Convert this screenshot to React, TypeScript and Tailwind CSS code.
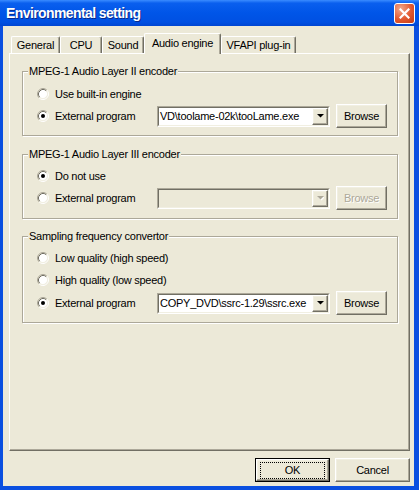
import type { ReactNode } from 'react';

const raised =
  'border border-t-white border-l-white border-r-[#716F64] border-b-[#716F64] shadow-[inset_-1px_-1px_#ACA899,inset_1px_1px_#F1EFE2]';

function Radio({ checked = false }: { checked?: boolean }) {
  return (
    <svg width="12" height="12" viewBox="0 0 12 12" className="shrink-0">
      <circle cx="6" cy="6" r="4.5" fill="#fff" />
      <path d="M2.11 9.89 A5.5 5.5 0 0 1 9.89 2.11" fill="none" stroke="#ACA899" />
      <path d="M9.89 2.11 A5.5 5.5 0 0 1 2.11 9.89" fill="none" stroke="#fff" />
      <path d="M2.82 9.18 A4.5 4.5 0 0 1 9.18 2.82" fill="none" stroke="#716F64" />
      <path d="M9.18 2.82 A4.5 4.5 0 0 1 2.82 9.18" fill="none" stroke="#F1EFE2" />
      {checked && <circle cx="6" cy="6" r="2" fill="#000" />}
    </svg>
  );
}

function RadioLabel({ checked, label }: { checked?: boolean; label: string }) {
  return (
    <div className="flex items-center">
      <Radio checked={checked} />
      <span className="ml-[6px] leading-[13px]">{label}</span>
    </div>
  );
}

function ComboBox({ value, disabled = false }: { value?: string; disabled?: boolean }) {
  return (
    <div className="flex h-[21px] w-[173px] border border-t-[#ACA899] border-l-[#ACA899] border-r-white border-b-white">
      <div
        className={`flex flex-1 border border-t-[#716F64] border-l-[#716F64] border-r-[#F1EFE2] border-b-[#F1EFE2] ${
          disabled ? 'bg-[#ECE9D8]' : 'bg-white'
        }`}
      >
        <span className="flex-1 overflow-hidden whitespace-nowrap pl-[1px] leading-[17px]">{value}</span>
        <div className={`flex w-[16px] items-center justify-center bg-[#ECE9D8] ${raised}`}>
          <svg width="7" height="5" viewBox="0 0 7 5">
            {disabled && <path d="M1 1h7L4.5 4.5z" fill="#fff" />}
            <path d="M0 0h7L3.5 3.5z" fill={disabled ? '#ACA899' : '#000'} />
          </svg>
        </div>
      </div>
    </div>
  );
}

function Button({
  children,
  disabled = false,
  className = '',
}: {
  children: ReactNode;
  disabled?: boolean;
  className?: string;
}) {
  return (
    <button
      type="button"
      className={`flex items-center justify-center bg-[#ECE9D8] leading-[13px] ${raised} ${
        disabled ? 'text-[#ACA899] [text-shadow:1px_1px_#fff]' : ''
      } ${className}`}
    >
      {children}
    </button>
  );
}

function GroupBox({
  title,
  className,
  children,
}: {
  title: string;
  className: string;
  children: ReactNode;
}) {
  return (
    <div
      className={`w-[376px] border border-[#ACA899] shadow-[1px_1px_0_#fff,inset_1px_1px_0_#fff] ${className}`}
    >
      <div className="-mt-[7px] ml-[5px] w-fit bg-[#ECE9D8] px-px leading-[13px]">{title}</div>
      {children}
    </div>
  );
}

const tabs = [
  { label: 'General', width: 'w-[49px]' },
  { label: 'CPU', width: 'w-[42px]' },
  { label: 'Sound', width: 'w-[42px]' },
  { label: 'Audio engine', width: 'w-[77px]', active: true },
  { label: 'VFAPI plug-in', width: 'w-[75px]' },
];

export default function App() {
  return (
    <div className="flex h-[490px] w-[419px] flex-col bg-[#0A4FE0] font-['Liberation_Sans',Arial,sans-serif] text-[11px] tracking-[-0.25px] text-black">
      {/* title bar */}
      <div className="flex h-[26px] items-center justify-between bg-[linear-gradient(to_bottom,#3A8CFF_0%,#0A5FEE_12%,#0055E8_50%,#0050E2_85%,#0046D2_100%)] pl-[6px] pr-[4px]">
        <span className="text-[14px] font-bold tracking-[-0.6px] text-white [text-shadow:1px_1px_#0A2A8A]">
          Environmental setting
        </span>
        <div className="flex size-[21px] items-center justify-center rounded-[3px] border border-white bg-[radial-gradient(circle_at_30%_25%,#F2A88C_0%,#E2582F_55%,#C23C15_100%)]">
          <svg width="11" height="11" viewBox="0 0 11 11">
            <path d="M1.5 1.5l8 8M9.5 1.5l-8 8" stroke="#fff" strokeWidth="2.2" strokeLinecap="square" />
          </svg>
        </div>
      </div>

      <div className="flex flex-1 flex-col pb-[4px] pl-[3px] pr-[5px]">
        <div className="flex flex-1 flex-col bg-[#ECE9D8] pt-[7px]">
          {/* tabs */}
          <div className="relative z-10 ml-[8px] flex h-[20px] items-end">
            {tabs.map((tab) =>
              tab.active ? (
                <div
                  key={tab.label}
                  className={`-mb-px flex h-[21px] justify-center rounded-t-[2px] border-l border-t border-r border-l-white border-t-white border-r-[#716F64] bg-[#ECE9D8] pt-[3px] leading-[13px] shadow-[inset_-1px_0_#ACA899] ${tab.width}`}
                >
                  {tab.label}
                </div>
              ) : (
                <div
                  key={tab.label}
                  className={`flex h-[17px] justify-center rounded-t-[2px] border-l border-t border-r border-l-white border-t-white border-r-[#716F64] bg-[#ECE9D8] pt-[2px] leading-[13px] shadow-[inset_-1px_0_#ACA899] ${tab.width}`}
                >
                  {tab.label}
                </div>
              ),
            )}
          </div>

          {/* tab panel */}
          <div className="ml-[6px] h-[398px] w-[401px] border border-t-white border-l-white border-r-[#716F64] border-b-[#716F64] pl-[12px] shadow-[inset_-1px_-1px_#ACA899]">
            <GroupBox title="MPEG-1 Audio Layer II encoder" className="mt-[17px] pb-[7px]">
              <div className="mt-[6px] flex h-[20px] items-center pl-[14px]">
                <RadioLabel label="Use built-in engine" />
              </div>
              <div className="flex h-[24px] items-center pl-[14px]">
                <div className="w-[120px]">
                  <RadioLabel checked label="External program" />
                </div>
                <ComboBox value="VD\toolame-02k\tooLame.exe" />
                <Button className="ml-[6px] h-[24px] w-[51px]">Browse</Button>
              </div>
            </GroupBox>

            <GroupBox title="MPEG-1 Audio Layer III encoder" className="mt-[18px] pb-[8px]">
              <div className="mt-[5px] flex h-[20px] items-center pl-[14px]">
                <RadioLabel checked label="Do not use" />
              </div>
              <div className="flex h-[24px] items-center pl-[14px]">
                <div className="w-[120px]">
                  <RadioLabel label="External program" />
                </div>
                <ComboBox disabled />
                <Button disabled className="ml-[6px] h-[24px] w-[51px]">
                  Browse
                </Button>
              </div>
            </GroupBox>

            <GroupBox title="Sampling frequency convertor" className="mt-[17px] pb-[7px]">
              <div className="mt-[4px] flex h-[22px] items-center pl-[14px]">
                <RadioLabel label="Low quality (high speed)" />
              </div>
              <div className="flex h-[22px] items-center pl-[14px]">
                <RadioLabel label="High quality (low speed)" />
              </div>
              <div className="flex h-[24px] items-center pl-[14px]">
                <div className="w-[120px]">
                  <RadioLabel checked label="External program" />
                </div>
                <ComboBox value="COPY_DVD\ssrc-1.29\ssrc.exe" />
                <Button className="ml-[6px] h-[24px] w-[51px]">Browse</Button>
              </div>
            </GroupBox>
          </div>

          {/* dialog buttons */}
          <div className="mr-[4px] mt-[7px] flex justify-end gap-[5px]">
            <div className="h-[24px] w-[75px] border border-black">
              <Button className="h-full w-full">
                <span className="border border-dotted border-black px-[24px] py-px">OK</span>
              </Button>
            </div>
            <Button className="h-[24px] w-[75px]">Cancel</Button>
          </div>
        </div>
      </div>
    </div>
  );
}
